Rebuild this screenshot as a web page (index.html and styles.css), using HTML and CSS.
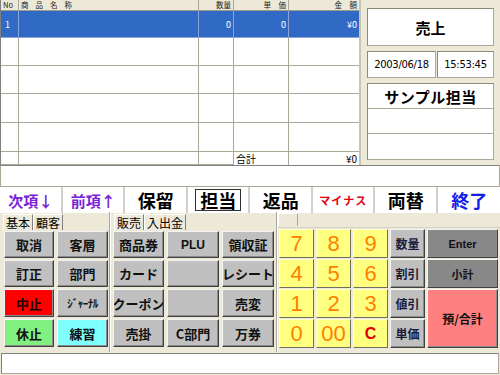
FILE: index.html
```html
<!DOCTYPE html>
<html lang="ja">
<head>
<meta charset="utf-8">
<title>POS</title>
<link rel="stylesheet" href="styles.css">
</head>
<body>
<div class="screen">
  <div class="top">
    <div class="grid-table">
      <div class="c h">No</div><div class="c h wide">商品名称</div><div class="c h r">数量</div><div class="c h r">単　価</div><div class="c h r">金　額</div>
      <div class="c s">1</div><div class="c s"></div><div class="c s r">0</div><div class="c s r">0</div><div class="c s r">¥0</div>
      <div class="c"></div><div class="c"></div><div class="c"></div><div class="c"></div><div class="c"></div>
      <div class="c"></div><div class="c"></div><div class="c"></div><div class="c"></div><div class="c"></div>
      <div class="c"></div><div class="c"></div><div class="c"></div><div class="c"></div><div class="c"></div>
      <div class="c"></div><div class="c"></div><div class="c"></div><div class="c"></div><div class="c"></div>
      <div class="c"></div><div class="c"></div><div class="c"></div><div class="c t">合計</div><div class="c t r">¥0</div>
    </div>
    <div class="side">
      <div class="box mode">売上</div>
      <div class="dates">
        <div class="box date">2003/06/18</div>
        <div class="box time">15:53:45</div>
      </div>
      <div class="box staff">
        <div class="srow name">サンプル担当</div>
        <div class="srow"></div>
        <div class="srow last"></div>
      </div>
    </div>
  </div>
  <div class="strip"></div>
  <div class="funcs">
    <div class="fb purple">次項↓</div>
    <div class="fb purple">前項↑</div>
    <div class="fb big">保留</div>
    <div class="fb big"><span class="focus">担当</span></div>
    <div class="fb big">返品</div>
    <div class="fb red small">マイナス</div>
    <div class="fb big">両替</div>
    <div class="fb big blue">終了</div>
  </div>
  <div class="bottom">
    <div class="pane left">
      <div class="tabs"><span class="tab sel">基本</span><span class="tab">顧客</span></div>
      <div class="keys keys2">
        <div class="k">取消</div><div class="k">客層</div>
        <div class="k">訂正</div><div class="k">部門</div>
        <div class="k kred">中止</div><div class="k hw">ｼﾞｬｰﾅﾙ</div>
        <div class="k kgreen">休止</div><div class="k kcyan">練習</div>
      </div>
    </div>
    <div class="pane mid">
      <div class="tabs"><span class="tab sel">販売</span><span class="tab">入出金</span></div>
      <div class="keys keys3">
        <div class="k">商品券</div><div class="k latin">PLU</div><div class="k">領収証</div>
        <div class="k">カード</div><div class="k"></div><div class="k">レシート</div>
        <div class="k">クーポン</div><div class="k"></div><div class="k">売変</div>
        <div class="k">売掛</div><div class="k">C部門</div><div class="k">万券</div>
      </div>
    </div>
    <div class="pane right">
      <div class="tabs rtabs"><span class="tab sel empty"></span></div>
      <div class="pad">
        <div class="k n">7</div><div class="k n">8</div><div class="k n">9</div><div class="k op">数量</div><div class="k dk">Enter</div>
        <div class="k n">4</div><div class="k n">5</div><div class="k n">6</div><div class="k op">割引</div><div class="k dk">小計</div>
        <div class="k n">1</div><div class="k n">2</div><div class="k n">3</div><div class="k op">値引</div><div class="k total">預/合計</div>
        <div class="k n">0</div><div class="k n">00</div><div class="k n clr">C</div><div class="k op">単価</div>
      </div>
    </div>
  </div>
  <div class="status"></div>
</div>
</body>
</html>
```
FILE: styles.css
```css
* { box-sizing: border-box; }
html, body { margin: 0; padding: 0; }
body {
  width: 500px;
  height: 375px;
  overflow: hidden;
  background: #ece9d8;
  font-family: "Noto Sans CJK JP", "Liberation Sans", sans-serif;
  color: #000;
}
.screen { width: 500px; height: 375px; display: flex; flex-direction: column; }

.top { display: flex; height: 165px; }
.grid-table {
  width: 359px;
  height: 165px;
  display: grid;
  grid-template-columns: 18px 180px 35px 55px 71px;
  grid-template-rows: 11px 27px 28px 28px 29px 29px 13px;
  background: #fff;
  border-left: 1px solid #808080;
}
.c {
  border-right: 1px solid #aca899;
  border-bottom: 1px solid #aca899;
  font-size: 9px;
  line-height: 9px;
  padding: 0 2px;
  white-space: nowrap;
  overflow: hidden;
  display: flex;
  align-items: center;
}
.c.r { justify-content: flex-end; }
.c.h {
  background: #ece9d8;
  font-size: 7.5px;
  line-height: 10px;
  color: #222;
  border-bottom-color: #9d9a8a;
  overflow: visible;
  align-items: center;
}
.c.h.wide { letter-spacing: 7px; padding-left: 2px; }
.c.s { background: #316ac5; color: #fff; border-color: #8aa6d8; padding-left: 4px; }
.c.t { font-size: 10px; line-height: 12px; border-bottom: none; overflow: visible; }

.side {
  width: 141px;
  border-left: 2px solid #c8c4b4;
  padding: 8px 6px 0 6px;
  display: flex;
  flex-direction: column;
  gap: 5px;
}
.box {
  background: #fff;
  border: 1px solid #aca899;
  border-top-color: #8c8978;
  border-left-color: #8c8978;
}
.mode {
  height: 38px;
  display: flex; align-items: center; justify-content: center;
  font-size: 15px; font-weight: bold;
}
.dates { display: flex; gap: 1px; height: 27px; }
.date, .time {
  display: flex; align-items: center; justify-content: center;
  font-size: 10px;
  font-family: "DejaVu Sans", sans-serif;
  letter-spacing: -0.3px;
}
.date { width: 69px; }
.time { flex: 1; }
.staff { height: 77px; display: flex; flex-direction: column; }
.srow { height: 25px; border-bottom: 1px solid #aca899; }
.srow.last { border-bottom: none; flex: 1; }
.srow.name {
  display: flex; align-items: center; justify-content: center;
  font-size: 15px; font-weight: bold; letter-spacing: 0.5px;
}

.strip {
  height: 22px;
  background: #fff;
  border: 1px solid #aca899;
  border-top-color: #808080;
  margin-top: 0;
}
.funcs {
  height: 25px;
  display: grid;
  grid-template-columns: repeat(8, 1fr);
  background: #fff;
  border-bottom: 1px solid #aca899;
}
.fb {
  background: #fff;
  border-right: 2px solid #d4d0c8;
  border-left: 1px solid #fff;
  display: flex; align-items: center; justify-content: center;
  font-weight: bold;
  white-space: nowrap;
  font-size: 18px;
}
.fb:last-child { border-right: none; }
.fb.purple { color: #7a22d8; font-size: 15px; }
.fb.big { font-size: 18px; }
.fb.red { color: #e00010; }
.fb.small { font-size: 11px; letter-spacing: 1px; }
.fb.blue { color: #1020e8; }
.focus { border: 1px solid #303030; padding: 0 4px; line-height: 20px; }

.bottom { height: 140px; display: flex; }
.pane { height: 140px; }
.pane.left { width: 110px; border-right: 1px solid #aca899; }
.pane.mid { width: 167px; border-right: 1px solid #aca899; border-left: 1px solid #fff; }
.pane.right { flex: 1; border-left: 1px solid #fff; }

.tabs { height: 19px; display: flex; padding: 2px 0 0 3px; }
.tab {
  font-size: 12px;
  line-height: 15px;
  padding: 0 2px;
  border-left: 1px solid #fff;
  border-top: 1px solid #fff;
  border-right: 1px solid #808080;
  height: 16px;
}
.tab.sel { background: #ece9d8; }
.rtabs { height: 16px; padding-top: 1px; padding-left: 0; border-bottom: 1px solid #d4d0c8; }
.tab.empty { width: 20px; height: 13px; border-right-color: #aca899; }

.keys { display: grid; padding-left: 4px; row-gap: 2px; column-gap: 3px; }
.keys2 { grid-template-columns: 50px 51px; grid-template-rows: 27px 27px 28px 28px; }
.keys3 { padding-left: 2px; grid-template-columns: 51px 52px 52px; grid-template-rows: 27px 27px 28px 28px; }

.k {
  background: #c0c0c0;
  border: 1px solid;
  border-color: #f4f4f4 #404040 #404040 #f4f4f4;
  box-shadow: inset -1px -1px 0 #8a8a8a;
  display: flex; align-items: center; justify-content: center;
  font-size: 13px;
  font-weight: bold;
  color: #111;
  white-space: nowrap;
  overflow: hidden;
}
.k.kred { background: #ff0000; color: #200000; }
.k.kgreen { background: #80f080; }
.k.kcyan { background: #80ffff; }
.k.hw { font-size: 11px; letter-spacing: -0.5px; }
.k.latin { font-family: "Liberation Sans", sans-serif; font-size: 12px; }

.pad {
  display: grid;
  padding: 1px 0 0 1px;
  grid-template-columns: 35px 35px 35px 35px 71px;
  grid-template-rows: 29px 29px 29px 29px;
  column-gap: 2px;
  row-gap: 1px;
}
.k.n {
  background: #ffff80;
  color: #ff8000;
  font-family: "Liberation Sans", sans-serif;
  font-weight: normal;
  font-size: 22px;
  border-color: #ffffd0 #707060 #707060 #ffffd0;
  box-shadow: none;
}
.k.clr { color: #e00000; font-size: 16px; font-weight: bold; }
.k.op { color: #1a1a3a; font-size: 12px; }
.k.dk { background: #888888; color: #101018; font-size: 11px; font-family: "Liberation Sans", "Noto Sans CJK JP", sans-serif; }
.k.total { background: #ff8080; grid-row: span 2; font-size: 12px; }

.status {
  height: 21px;
  margin: 1px 1px 0 1px;
  background: #fff;
  border: 1px solid #aca899;
  border-top-color: #808080;
  border-left-color: #808080;
}
```
